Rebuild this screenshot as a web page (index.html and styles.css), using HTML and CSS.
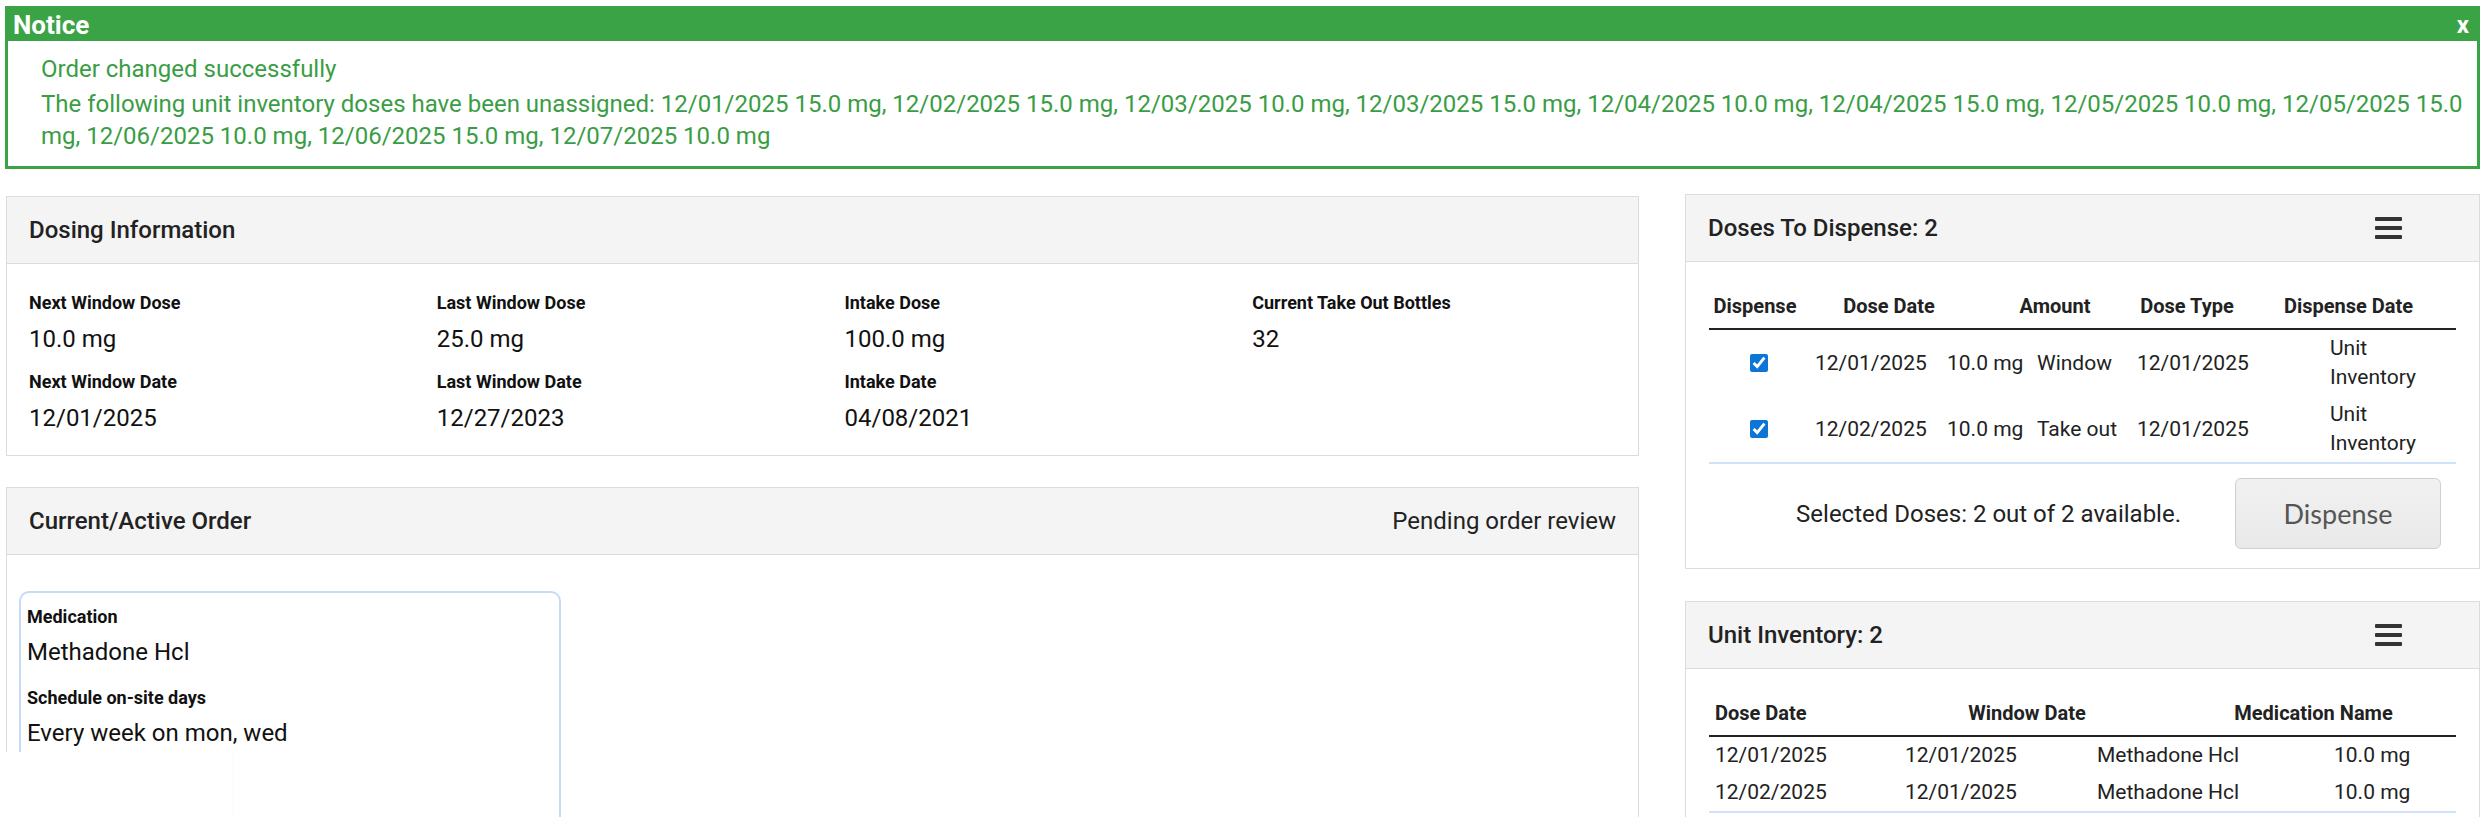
FILE: index.html
```html
<!DOCTYPE html>
<html lang="en">
<head>
<meta charset="utf-8">
<title>Dosing</title>
<link rel="stylesheet" href="styles.css">
</head>
<body>
<div class="page">
  <div class="notice">
    <div class="notice-head"><span class="notice-title">Notice</span><span class="notice-close">x</span></div>
    <div class="notice-body">
      <p class="msg msg-first">Order changed successfully</p>
      <p class="msg">The following unit inventory doses have been unassigned: 12/01/2025 15.0 mg, 12/02/2025 15.0 mg, 12/03/2025 10.0 mg, 12/03/2025 15.0 mg, 12/04/2025 10.0 mg, 12/04/2025 15.0 mg, 12/05/2025 10.0 mg, 12/05/2025 15.0 mg, 12/06/2025 10.0 mg, 12/06/2025 15.0 mg, 12/07/2025 10.0 mg</p>
    </div>
  </div>

  <div class="main">
    <div class="col-left">
      <section class="panel">
        <div class="panel-head"><h2 class="panel-title">Dosing Information</h2></div>
        <div class="dosing-grid">
          <div class="field"><div class="lbl">Next Window Dose</div><div class="val">10.0 mg</div></div>
          <div class="field"><div class="lbl">Last Window Dose</div><div class="val">25.0 mg</div></div>
          <div class="field"><div class="lbl">Intake Dose</div><div class="val">100.0 mg</div></div>
          <div class="field"><div class="lbl">Current Take Out Bottles</div><div class="val">32</div></div>
          <div class="field"><div class="lbl">Next Window Date</div><div class="val">12/01/2025</div></div>
          <div class="field"><div class="lbl">Last Window Date</div><div class="val">12/27/2023</div></div>
          <div class="field"><div class="lbl">Intake Date</div><div class="val">04/08/2021</div></div>
          <div class="field"></div>
        </div>
      </section>

      <section class="panel order-panel">
        <div class="panel-head"><h2 class="panel-title">Current/Active Order</h2><span class="pending">Pending order review</span></div>
        <div class="order-body">
          <div class="order-card">
            <div class="lbl">Medication</div>
            <div class="val">Methadone Hcl</div>
            <div class="lbl lbl-gap">Schedule on-site days</div>
            <div class="val">Every week on mon, wed</div>
          </div>
        </div>
      </section>
    </div>

    <div class="col-right">
      <section class="panel">
        <div class="panel-head"><h2 class="panel-title">Doses To Dispense: 2</h2><span class="menu"><i></i><i></i><i></i></span></div>
        <div class="tbl-wrap">
          <div class="d-head">
            <span>Dispense</span><span>Dose Date</span><span>Amount</span><span>Dose Type</span><span>Dispense Date</span>
          </div>
          <div class="d-row">
            <span class="cb"><input type="checkbox" checked></span><span>12/01/2025</span><span>10.0 mg</span><span>Window</span><span>12/01/2025</span><span class="unit">Unit Inventory</span>
          </div>
          <div class="d-row d-last">
            <span class="cb"><input type="checkbox" checked></span><span>12/02/2025</span><span>10.0 mg</span><span>Take out</span><span>12/01/2025</span><span class="unit">Unit Inventory</span>
          </div>
          <div class="d-foot">
            <span class="selected">Selected Doses: 2 out of 2 available.</span>
            <button class="btn" type="button">Dispense</button>
          </div>
        </div>
      </section>

      <section class="panel inv-panel">
        <div class="panel-head"><h2 class="panel-title">Unit Inventory: 2</h2><span class="menu"><i></i><i></i><i></i></span></div>
        <div class="tbl-wrap">
          <div class="u-head"><span>Dose Date</span><span>Window Date</span><span>Medication Name</span></div>
          <div class="u-row"><span>12/01/2025</span><span>12/01/2025</span><span>Methadone Hcl</span><span>10.0 mg</span></div>
          <div class="u-row u-last"><span>12/02/2025</span><span>12/01/2025</span><span>Methadone Hcl</span><span>10.0 mg</span></div>
        </div>
      </section>
    </div>
  </div>
  <div class="overlay"></div>
</div>
</body>
</html>
```

FILE: styles.css
```css
* { box-sizing: border-box; }
html, body { margin: 0; padding: 0; background: #fff; }
body {
  font-family: Roboto, "Liberation Sans", sans-serif;
  color: #222;
  height: 817px;
  overflow: hidden;
}
.page { position: relative; padding: 6px 3px 0 5px; }

/* Notice */
.notice { border: 3px solid #3aa346; }
.notice-head {
  background: #3aa346;
  color: #fff;
  height: 32px;
  display: flex;
  justify-content: space-between;
  align-items: center;
  padding: 0 8px 0 5px;
  font-weight: 700;
  font-size: 26px;
}
.notice-close { font-size: 24px; }
.notice-body { padding: 12px 4px 14px 33px; color: #3a9d45; font-size: 24px; line-height: 32px; }
.msg { margin: 0; }
.msg-first { margin-bottom: 3px; }

/* Layout */
.main { display: grid; grid-template-columns: 1633px 795px; column-gap: 46px; margin-top: 25px; padding-left: 1px; }
.col-left { margin-top: 2px; }

.panel { border: 1px solid #dcdcdc; background: #fff; }
.panel-head {
  height: 67px;
  background: #f4f4f4;
  border-bottom: 1px solid #dcdcdc;
  display: flex;
  align-items: center;
  justify-content: space-between;
  padding: 0 22px;
}
.panel-title { margin: 0; font-size: 24px; font-weight: 500; color: #222; }

.lbl { font-size: 18px; font-weight: 700; line-height: 24px; color: #111; }
.val { font-size: 24px; line-height: 30px; margin-top: 9px; color: #111; }

.dosing-grid { display: grid; grid-template-columns: repeat(4, 1fr); row-gap: 16px; padding: 27px 0 22px; }
.field { padding-left: 22px; }

.order-panel { margin-top: 31px; height: 400px; }
.pending { font-size: 24px; color: #222; }
.order-body { padding: 36px 0 0 12px; }
.order-card {
  width: 542px;
  min-height: 300px;
  border: 2px solid #c6dbf6;
  border-radius: 10px;
  padding: 12px 6px;
}
.order-card .val { margin-top: 8px; }
.order-card .lbl-gap { margin-top: 19px; }

/* Right tables */
.menu { display: flex; flex-direction: column; gap: 5px; margin-right: 55px; }
.menu i { display: block; width: 27px; height: 4px; background: #333; border-radius: 1px; }

.tbl-wrap { padding: 32px 23px 0; }
.d-head {
  display: grid;
  grid-template-columns: 92px 176px 156px 108px 1fr;
  font-size: 20px; font-weight: 700; line-height: 24px;
  text-align: center;
  padding-bottom: 10px;
  border-bottom: 2px solid #222;
}
.d-row {
  display: grid;
  grid-template-columns: 99px 132px 90px 100px 193px 1fr;
  align-items: center;
  font-size: 21px; line-height: 29px;
  padding: 4px 0;
  color: #222;
}
.d-row span { padding-left: 7px; }
.d-row .cb { padding-left: 0; display: flex; justify-content: center; }
.d-row .unit { max-width: 115px; }
.d-last { border-bottom: 2px solid #cfe2f8; }
.cb input { width: 18px; height: 18px; margin: 0; accent-color: #0b75d8; }

.d-foot { display: flex; align-items: center; justify-content: flex-end; padding: 14px 15px 19px 0; }
.selected { font-size: 24px; margin-right: 54px; color: #222; }
.btn {
  font-family: Lato, "Open Sans", sans-serif;
  font-size: 27px;
  color: #555;
  width: 206px;
  height: 71px;
  border: 1px solid #cfcfcf;
  border-radius: 6px;
  background: linear-gradient(#f1f1f1, #e9e9e9);
}

.inv-panel { margin-top: 32px; height: 400px; }
.u-head {
  display: grid;
  grid-template-columns: 190px 256px 1fr;
  font-size: 20px; font-weight: 700; line-height: 24px;
  padding-bottom: 10px;
  border-bottom: 2px solid #222;
}
.u-head span:first-child { padding-left: 6px; }
.u-head span:nth-child(2) { text-align: center; }
.u-head span:nth-child(3) { text-align: center; padding-left: 16px; }
.u-row {
  display: grid;
  grid-template-columns: 190px 192px 237px 1fr;
  font-size: 21px; line-height: 29px;
  padding: 4px 0;
  color: #222;
}
.u-row span { padding-left: 6px; }
.u-last { border-bottom: 2px solid #cfe2f8; }

.overlay {
  position: absolute;
  left: 0;
  top: 752px;
  width: 234px;
  height: 80px;
  background: #fff;
  border-right: 1px solid #fafafa;
}
```
